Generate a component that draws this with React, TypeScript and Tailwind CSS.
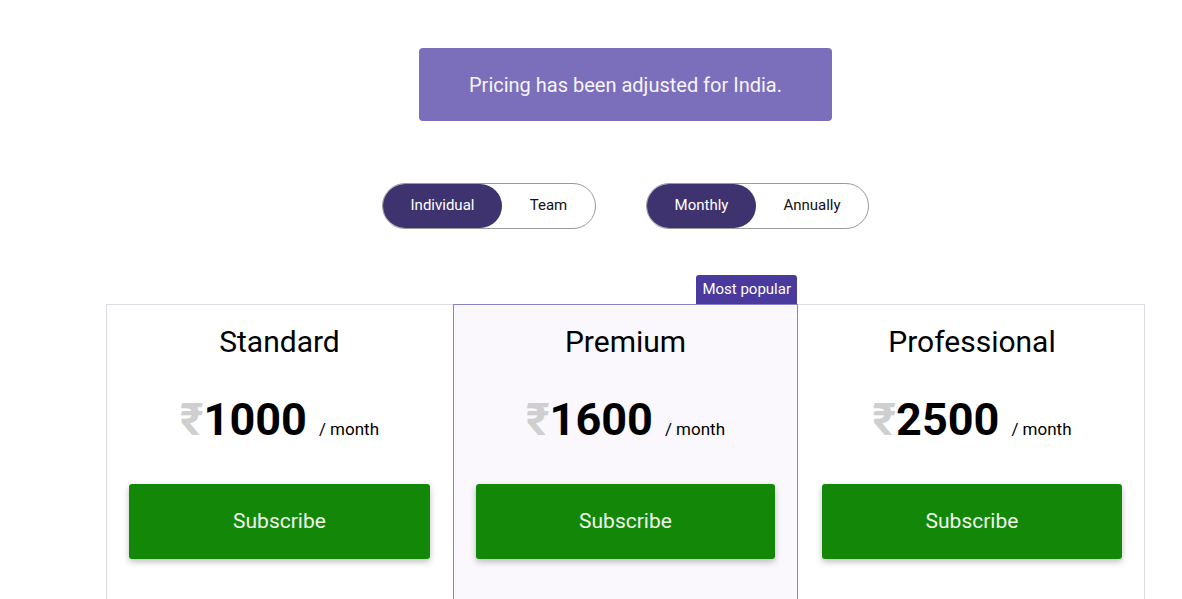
import React from "react";

const plans = [
  { name: "Standard", price: "1000", popular: false },
  { name: "Premium", price: "1600", popular: true },
  { name: "Professional", price: "2500", popular: false },
];

function Toggle({ options, active, widths }: { options: string[]; active: number; widths: string[] }) {
  return (
    <div className="flex h-[46px] rounded-full border border-[#9a9a9a] bg-white">
      {options.map((o, i) => (
        <button
          key={o}
          className={`${widths[i]} h-full rounded-full pb-[2px] text-[15px] ${
            i === active ? "bg-[#3f336f] text-white" : "text-[#111]"
          }`}
        >
          {o}
        </button>
      ))}
    </div>
  );
}

export default function App() {
  return (
    <div className="min-h-screen bg-white pl-[69px] font-['Roboto',sans-serif] text-black">
      <div className="flex flex-col items-center pt-[48px]">
        {/* Region notice */}
        <div className="flex h-[73px] w-[413px] items-center justify-center rounded-[4px] bg-[#7b6fbb] text-[20px] text-[#f6f4fb]">
          Pricing has been adjusted for India.
        </div>

        {/* Toggles */}
        <div className="mt-[62px] flex gap-[50px]">
          <Toggle options={["Individual", "Team"]} active={0} widths={["w-[119px]", "w-[93px]"]} />
          <Toggle options={["Monthly", "Annually"]} active={0} widths={["w-[109px]", "w-[112px]"]} />
        </div>

        {/* Plans */}
        <div className="mt-[75px] grid w-[1039px] grid-cols-[347px_345px_347px]">
          {plans.map((p) => (
            <div
              key={p.name}
              className={`relative flex h-[296px] flex-col items-center px-[22px] ${
                p.popular
                  ? "border border-[#8b84c4] bg-[#faf8fc]"
                  : "border-y border-[#dcdce4] bg-white first:border-l first:pr-[23px] last:border-r last:pl-[24px]"
              }`}
            >
              {p.popular && (
                <div className="absolute -top-[30px] right-0 rounded-t-[3px] bg-[#4a3a9e] px-[6px] py-[5px] text-[15px] leading-[19px] text-white">
                  Most popular
                </div>
              )}
              <div className="mt-[18px] text-[30px] leading-[38px]">{p.name}</div>
              <div className="mt-[31px] flex items-baseline">
                <span className="text-[45px] font-bold leading-[56px] text-[#cfcfcf]">₹</span>
                <span className="text-[45px] font-bold leading-[56px]">{p.price}</span>
                <span className="ml-[12px] text-[17px]">/ month</span>
              </div>
              <button className="mt-[36px] flex h-[75px] w-full items-center justify-center rounded-[3px] bg-[#138808] text-[21px] text-[#eef8ea] shadow-[0_3px_6px_rgba(0,0,0,0.25)]">
                Subscribe
              </button>
            </div>
          ))}
        </div>
      </div>
    </div>
  );
}
